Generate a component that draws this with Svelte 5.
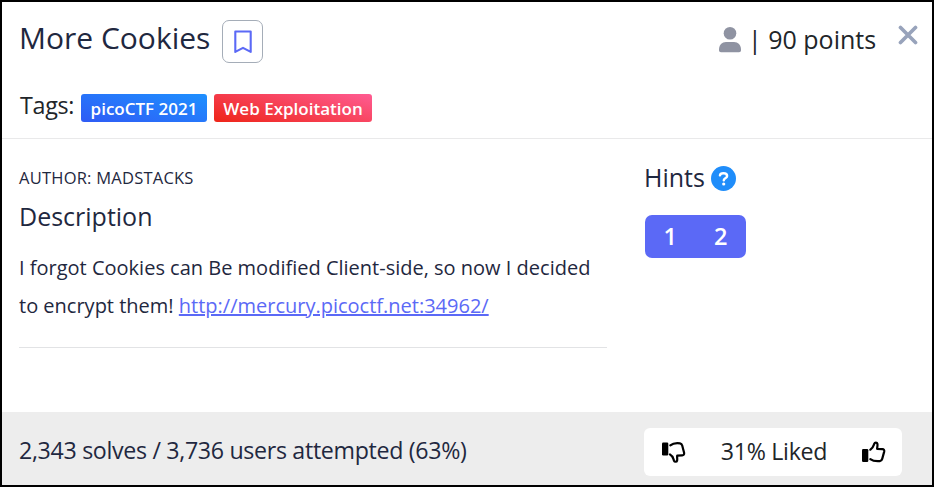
<script>
  const tags = [
    { name: 'picoCTF 2021', kind: 'event' },
    { name: 'Web Exploitation', kind: 'category' }
  ];
  const hints = [1, 2];
</script>

<div class="modal">
  <header>
    <div class="top">
      <h1>More Cookies</h1>
      <button class="bookmark" aria-label="Bookmark">
        <svg width="18" height="24" viewBox="0 0 18 24"><path d="M1.300 1.500h15.400v20.400L9 17.900l-7.700 4z" fill="none" stroke="#5b69f6" stroke-width="2.100" stroke-linejoin="round" /></svg>
      </button>
      <svg class="user" width="22" height="26" viewBox="0 0 22 26" fill="#8f93a2"><circle cx="11" cy="6.3" r="6.3" /><path d="M0 22.5C0 18 3 15 7 15h8c4 0 7 3 7 7.500v.8c0 1.200-.8 2-2 2H2c-1.200 0-2-.8-2-2z" /></svg>
      <span class="points">| 90 points</span>
      <button class="close" aria-label="Close">
        <svg width="20" height="20" viewBox="0 0 20 20"><path d="M2.500 2.500l15 15m0-15l-15 15" fill="none" stroke="#98a3bb" stroke-width="3.700" stroke-linecap="round" /></svg>
      </button>
    </div>
    <div class="tags">
      <span class="label">Tags:</span>
      {#each tags as tag}
        <span class="tag {tag.kind}"><span>{tag.name}</span></span>
      {/each}
    </div>
  </header>
  <main>
    <section class="info">
      <div class="author">AUTHOR: MADSTACKS</div>
      <h2>Description</h2>
      <p>I forgot Cookies can Be modified Client-side, so now I decided<br />to encrypt them! <a href="http://mercury.picoctf.net:34962/">http://mercury.picoctf.net:34962/</a></p>
    </section>
    <section class="hints">
      <div class="heading">
        <h2>Hints</h2>
        <svg width="25" height="25" viewBox="0 0 25 25"><circle cx="12.500" cy="12.500" r="12.500" fill="#1f8dfa" /><path d="M9 9.300C9.200 7.800 10.400 7.200 12.400 7.200c2.300 0 3.700 1.100 3.700 2.700 0 2.500-3.300 2.300-3.300 4.400" fill="none" stroke="#fff" stroke-width="2.500" stroke-linecap="round" /><circle cx="12.700" cy="18" r="1.600" fill="#fff" /></svg>
      </div>
      <div class="group">
        {#each hints as hint}<button>{hint}</button>{/each}
      </div>
    </section>
  </main>
  <footer>
    <span class="solves">2,343 solves / 3,736 users attempted (63%)</span>
    <div class="rating">
      <svg width="24" height="22" viewBox="0 0 24 22"><rect x="0" y="1.500" width="6.300" height="13" rx="1.200" /><path d="M8.300 4.400C11 2.100 13 1.600 18 2.300c1.400.2 1.900 1 2.200 2.200l1.900 7.300c.3 1.500-.4 2.400-1.900 2.500l-5 .3c-.3 1.500.3 3.700-.1 5-.4 1.500-2.500 1.500-3.100.1-1-2.600-1-4.700-4-6.200" fill="none" stroke="#000" stroke-width="2.200" stroke-linecap="round" stroke-linejoin="round" /></svg>
      <span>31% Liked</span>
      <svg width="24" height="22" viewBox="0 0 24 22"><rect x="0" y="8" width="6.300" height="13" rx="1.200" /><path d="M8.300 8.700C11 7.200 11.500 5 12.300 2.700c.5-1.500 2.700-1.400 3.100.1.400 1.400-.2 3.500-.3 5l5.300.4c1.500.1 2.100 1 1.800 2.400l-2 7.300c-.4 1.400-1 2.100-2.300 2.200-5 .4-7 0-9.600-2" fill="none" stroke="#000" stroke-width="2.200" stroke-linecap="round" stroke-linejoin="round" /></svg>
    </div>
  </footer>
</div>

<style>
  .modal {
    box-sizing: border-box;
    width: 934px;
    height: 487px;
    border: 2px solid #000;
    background: #fff;
    color: #1f2840;
    font-family: "Open Sans", sans-serif;
    display: flex;
    flex-direction: column;
  }
  h1, h2, p { margin: 0; font-weight: 400; white-space: nowrap; }
  button { padding: 0; margin: 0; border: 0; background: none; font: inherit; color: inherit; }
  svg { display: block; flex: none; }
  header {
    box-sizing: border-box;
    height: 137px;
    border-bottom: 1px solid #e9e9ea;
    padding: 18px 14px 0 17px;
  }
  .top { display: flex; height: 43px; align-items: flex-start; }
  h1 { width: 203px; font-size: 30px; line-height: 36px; }
  .bookmark {
    box-sizing: border-box;
    width: 41px;
    height: 43px;
    border: 1px solid #a5adb8;
    border-radius: 7px;
    display: flex;
    align-items: center;
    justify-content: center;
  }
  .user { margin: 7px 7px 0 auto; }
  .points { width: 131px; font-size: 25px; line-height: 38px; color: #212529; white-space: nowrap; }
  .close { margin: 5px 0 0 19px; }
  .tags { display: flex; margin-top: 25px; height: 34px; align-items: center; color: #212529; }
  .label { box-sizing: border-box; width: 62px; padding-left: 1px; font-size: 23.300px; line-height: 32px; letter-spacing: -0.3px; }
  .tag {
    box-sizing: border-box;
    height: 28px;
    border-radius: 3px;
    color: #fff;
    font-size: 17px;
    font-weight: 600;
    line-height: 29px;
    text-align: center;
    white-space: nowrap;
    margin-top: 5px;
  }
  .event { width: 126px; background: linear-gradient(15deg, #2f5bf5, #1e90ff); margin-right: 7px; }
  .category { width: 158px; background: linear-gradient(15deg, #ee2518, #ff5c93); }
  main { display: flex; flex: 1; padding: 0 17px; }
  .info { width: 588px; height: 208px; border-bottom: 1px solid #e2e3e5; }
  .author { margin-top: 27px; font-size: 16.500px; line-height: 24px; letter-spacing: 0.23px; }
  .info h2 { margin-top: 9px; font-size: 25px; line-height: 34px; }
  .info p { margin-top: 16px; font-size: 20px; line-height: 38px; }
  a { color: #5b69f6; text-decoration: underline; }
  .hints { margin-left: 37px; }
  .heading { display: flex; margin-top: 25px; height: 28px; align-items: center; }
  .heading h2 { width: 67px; font-size: 25px; line-height: 28px; margin-top: -2px; }
  .group { display: flex; width: 101px; height: 43px; margin: 23px 0 0 1px; border-radius: 7px; background: #5b69f6; color: #fff; }
  .group button { flex: 1; font-size: 23.500px; font-weight: 600; line-height: 43px; }
  footer {
    box-sizing: border-box;
    height: 73px;
    background: #ededed;
    display: flex;
    align-items: center;
    justify-content: space-between;
    padding: 6px 30px 0 17px;
  }
  .solves { font-size: 23.200px; line-height: 32px; letter-spacing: -0.32px; margin-bottom: 4px; }
  .rating {
    box-sizing: border-box;
    width: 258px;
    height: 48px;
    border-radius: 6px;
    background: #fff;
    display: flex;
    align-items: center;
    justify-content: space-between;
    padding: 0 16px 0 18px;
  }
  .rating span { font-size: 23.200px; line-height: 44px; letter-spacing: -0.3px; margin-bottom: 2px; color: #212529; }
</style>
